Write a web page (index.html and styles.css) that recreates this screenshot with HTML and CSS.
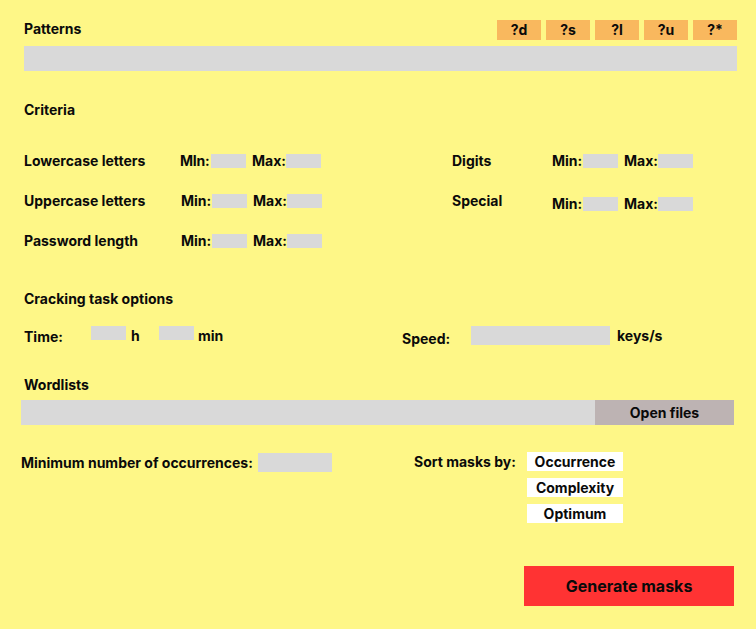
FILE: index.html
```html
<!DOCTYPE html>
<html lang="en">
<head>
<meta charset="utf-8">
<title>Mask generator</title>
<link rel="stylesheet" href="styles.css">
</head>
<body>
<div class="page">
  <section class="patterns">
    <div class="head">
      <h2 class="title">Patterns</h2>
      <div class="chips">
        <span class="chip">?d</span>
        <span class="chip">?s</span>
        <span class="chip">?l</span>
        <span class="chip">?u</span>
        <span class="chip">?*</span>
      </div>
    </div>
    <div class="bar"></div>
  </section>

  <section class="criteria">
    <h2 class="title title-criteria">Criteria</h2>
    <div class="crit-grid">
      <div class="col col-left">
        <div class="row">
          <span class="lbl">Lowercase letters</span>
          <span class="k k-min k-first">MIn:</span><span class="box"></span>
          <span class="k k-max">Max:</span><span class="box"></span>
        </div>
        <div class="row">
          <span class="lbl lbl-shift">Uppercase letters</span>
          <span class="k k-min">Min:</span><span class="box"></span>
          <span class="k k-max">Max:</span><span class="box"></span>
        </div>
        <div class="row">
          <span class="lbl lbl-shift">Password length</span>
          <span class="k k-min">Min:</span><span class="box"></span>
          <span class="k k-max">Max:</span><span class="box"></span>
        </div>
      </div>
      <div class="col col-right">
        <div class="row">
          <span class="lbl lbl-right">Digits</span>
          <span class="k k-min">Min:</span><span class="box"></span>
          <span class="k k-max">Max:</span><span class="box"></span>
        </div>
        <div class="row">
          <span class="lbl lbl-right">Special</span>
          <span class="fields-low">
            <span class="k k-min">Min:</span><span class="box"></span>
            <span class="k k-max">Max:</span><span class="box"></span>
          </span>
        </div>
      </div>
    </div>
  </section>

  <section class="task">
    <h2 class="title title-task">Cracking task options</h2>
    <div class="task-row">
      <div class="time-group">
        <span class="time-lbl">Time:</span>
        <span class="box box-time"></span>
        <span class="unit-h">h</span>
        <span class="box box-time"></span>
        <span class="unit-min">min</span>
      </div>
      <div class="speed-group">
        <span class="speed-lbl">Speed:</span>
        <span class="box box-speed"></span>
        <span class="unit-keys">keys/s</span>
      </div>
    </div>
  </section>

  <section class="wordlists">
    <h2 class="title title-words">Wordlists</h2>
    <div class="file-row">
      <div class="file-field"></div>
      <button class="open-btn" type="button">Open files</button>
    </div>
  </section>

  <section class="options">
    <div class="occ-group">
      <span class="occ-lbl">Minimum number of occurrences:</span>
      <span class="box box-occ"></span>
    </div>
    <div class="sort-group">
      <span class="sort-lbl">Sort masks by:</span>
      <div class="sort-list">
        <button class="sort-btn" type="button">Occurrence</button>
        <button class="sort-btn" type="button">Complexity</button>
        <button class="sort-btn" type="button">Optimum</button>
      </div>
    </div>
  </section>

  <div class="actions">
    <button class="generate" type="button">Generate masks</button>
  </div>
</div>
</body>
</html>
```

FILE: styles.css
```css
* { box-sizing: border-box; }

html, body {
  margin: 0;
  padding: 0;
  background: #fef787;
}

body {
  font-family: Inter, "Noto Sans", "Liberation Sans", sans-serif;
  font-weight: 700;
  font-size: 14px;
  line-height: 16px;
  color: #0a0a0a;
  width: 756px;
  height: 629px;
  overflow: hidden;
}

button {
  font: inherit;
  color: inherit;
  border: 0;
  padding: 0;
  margin: 0;
}

.page {
  padding: 19px 19px 0 24px;
}

.title {
  margin: 0;
  font-size: 14px;
  line-height: 16px;
  font-weight: 700;
}

/* Patterns */
.head {
  display: flex;
  justify-content: space-between;
  align-items: center;
  height: 20px;
  margin-top: 1px;
}

.head .title { margin-top: -2px; }

.chips {
  display: flex;
  gap: 5px;
}

.chip {
  width: 44px;
  height: 20px;
  background: #f9b85e;
  display: flex;
  align-items: center;
  justify-content: center;
}

.bar {
  margin-top: 6px;
  height: 25px;
  background: #d9d9d9;
}

/* Criteria */
.title-criteria { margin-top: 31px; }

.crit-grid {
  display: flex;
  margin-top: 23px;
}

.col-left { width: 428px; }

.row {
  display: flex;
  align-items: center;
  height: 40px;
}

.lbl { width: 156px; flex-shrink: 0; }
.lbl-shift { width: 157px; }
.lbl-right { width: 100px; }

.k { flex-shrink: 0; white-space: nowrap; }
.k-min { width: 31px; }
.k-first { letter-spacing: -0.2px; }
.k-max { width: 34px; margin-left: 6px; }

.box {
  display: block;
  flex-shrink: 0;
  width: 35px;
  height: 14px;
  background: #d9d9d9;
}

.fields-low {
  display: flex;
  align-items: center;
  padding-top: 6px;
}

/* Task options */
.title-task { margin-top: 30px; }

.task-row {
  display: flex;
  margin-top: 19px;
  height: 20px;
}

.time-group {
  width: 378px;
  display: flex;
  align-items: center;
}

.time-lbl { width: 67px; padding-top: 2px; }
.box-time { align-self: flex-start; }
.unit-h { width: 28px; margin-left: 5px; }
.unit-min { margin-left: 4px; }

.speed-group {
  display: flex;
  align-items: center;
}

.speed-lbl { width: 69px; padding-top: 5px; }
.box-speed { width: 139px; height: 19px; align-self: flex-start; }
.unit-keys { margin-left: 7px; }

/* Wordlists */
.title-words { margin-top: 31px; }

.file-row {
  display: flex;
  margin: 7px 3px 0 -3px;
  height: 25px;
}

.file-field {
  flex: 1;
  background: #d9d9d9;
}

.open-btn {
  width: 139px;
  background: #bdb3b3;
  display: flex;
  align-items: center;
  justify-content: center;
}

/* Options */
.options {
  display: flex;
  margin-top: 27px;
  margin-left: -3px;
}

.occ-group {
  width: 393px;
  display: flex;
  align-items: center;
  height: 19px;
  margin-top: 1px;
}

.box-occ { width: 74px; height: 19px; margin-left: 5px; }

.sort-group {
  display: flex;
  align-items: flex-start;
}

.sort-lbl { width: 113px; padding-top: 2px; }

.sort-list {
  display: flex;
  flex-direction: column;
  gap: 7px;
}

.sort-btn {
  width: 96px;
  height: 19px;
  background: #ffffff;
  display: flex;
  align-items: center;
  justify-content: center;
}

/* Actions */
.actions {
  display: flex;
  justify-content: flex-end;
  margin-top: 43px;
  margin-right: 3px;
}

.generate {
  width: 210px;
  height: 40px;
  background: #ff3333;
  font-size: 16px;
  display: flex;
  align-items: center;
  justify-content: center;
}
```
